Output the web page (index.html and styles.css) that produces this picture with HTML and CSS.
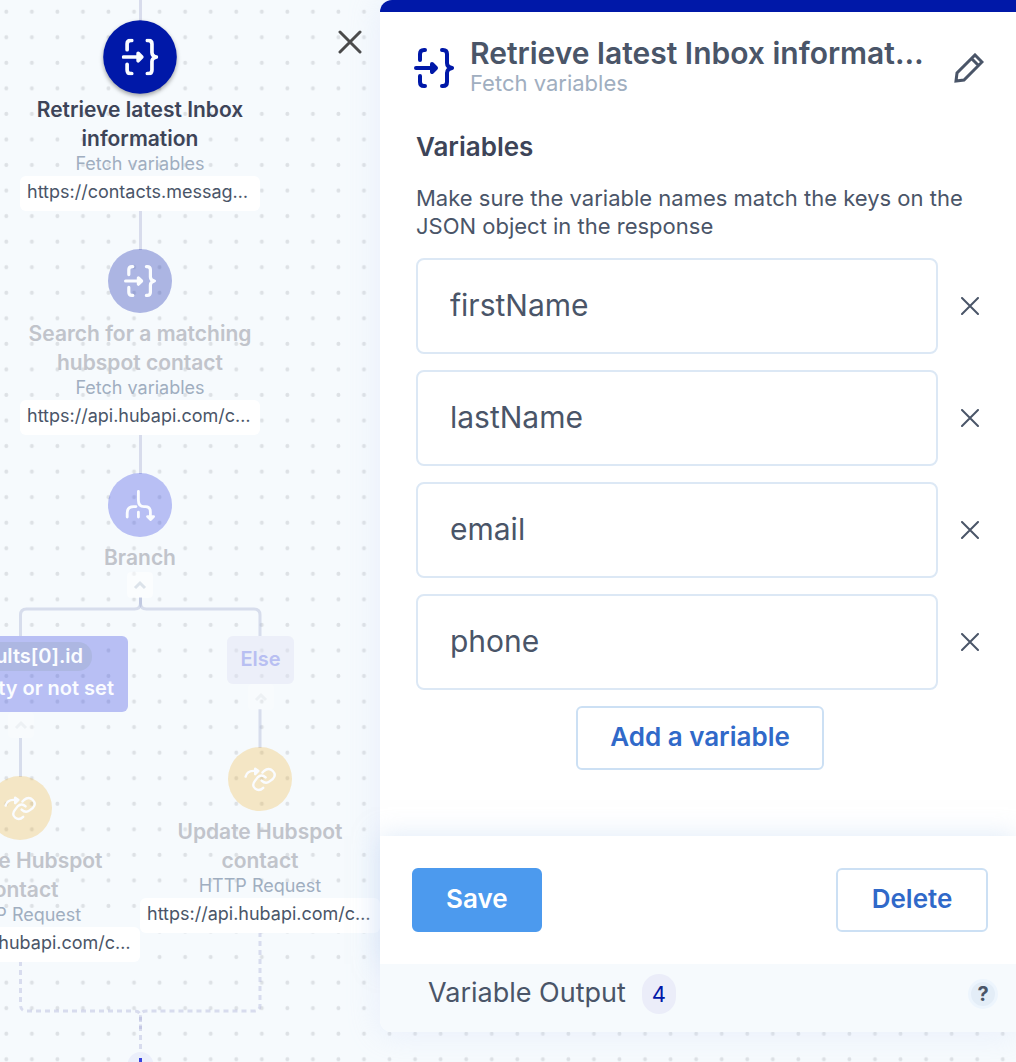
FILE: index.html
```html
<!DOCTYPE html>
<html lang="en">
<head>
<meta charset="utf-8">
<title>Workflow editor</title>
<link rel="stylesheet" href="styles.css">
</head>
<body>
<!-- icons shared by the canvas and the panel -->
<svg class="defs" aria-hidden="true">
  <symbol id="fetch" viewBox="0 0 40 40">
    <g fill="none" stroke="currentColor" stroke-width="4" stroke-linecap="round" stroke-linejoin="round">
      <path d="M11 2h-1q-4 0-4 4v6M6 28v6q0 4 4 4h1"/>
      <path d="M28 2h1q4 0 4 4v9q0 4 5 5q-5 1-5 5v9q0 4-4 4h-1"/>
      <path d="M2 20h18"/>
      <path d="M18 16l4 4l-4 4z" fill="currentColor"/>
    </g>
  </symbol>
  <symbol id="branch" viewBox="0 0 40 40">
    <g fill="none" stroke="currentColor" stroke-width="3.5" stroke-linecap="round" stroke-linejoin="round">
      <path d="M18 3v11q0 8 7 8h2q6 0 6 7v6"/>
      <path d="M15 22h-3q-8 0-8 8v5M18 29v6"/>
      <path d="M29.500 34.500h7.500l-3.750 3.750z" fill="currentColor"/>
    </g>
  </symbol>
  <symbol id="link" viewBox="0 0 40 40">
    <g fill="none" stroke="currentColor" stroke-width="3" stroke-linecap="round" stroke-linejoin="round">
      <path d="M2 17q2-8 12-7"/>
      <path d="M14 7l4 3l-4 4z" fill="currentColor"/>
      <path d="M23 12l2-2q6-5 11 0t0 10l-4 3q-5 4-10-1"/>
      <path d="M27 18q-5-5-10 0l-3 4q-5 6 0 10t10-1"/>
    </g>
  </symbol>
</svg>

<main class="canvas">
  <svg class="wires" aria-hidden="true">
    <defs>
      <pattern id="dots" width="25.55" height="25.55" patternUnits="userSpaceOnUse">
        <circle cx="6.3" cy="11.7" r="2"/>
      </pattern>
    </defs>
    <rect width="100%" height="100%" fill="url(#dots)"/>
    <path class="wire" d="M140.5 0V25M140.5 211V250M140.5 435V474"/>
    <path class="wire dim" d="M140.5 597v6q0 6-6 6H26.5q-6 0-6 6v21M20.5 738v39"/>
    <path class="wire dim" d="M140.5 597v6q0 6 6 6H254q6 0 6 6v21M260 709v39"/>
    <path class="wire dash" d="M20.5 961v44q0 6 6 6h108q6 0 6 6v44"/>
    <path class="wire dash" d="M260 932v73q0 6-6 6H146.5q-6 0-6 6v12"/>
    <circle class="plus" cx="140.5" cy="1065" r="13"/>
    <path class="plus-mark" d="M140.5 1058v14M133.5 1065h14"/>
  </svg>

  <div class="node current fetch-latest">
    <span class="disc"><svg><use href="#fetch"/></svg></span>
    <h3>Retrieve latest Inbox<br>information</h3>
    <small>Fetch variables</small>
    <span class="url">https://contacts.messag…</span>
  </div>

  <div class="node search">
    <span class="disc"><svg><use href="#fetch"/></svg></span>
    <h3>Search for a matching<br>hubspot contact</h3>
    <small>Fetch variables</small>
    <span class="url">https://api.hubapi.com/c…</span>
  </div>

  <div class="node split">
    <span class="disc"><svg><use href="#branch"/></svg></span>
    <h3>Branch</h3>
    <button class="fold" aria-label="Collapse branch"><svg viewBox="0 0 26 26"><path d="M8 16l5-5l5 5"/></svg></button>
  </div>

  <div class="branch if">
    <div class="condition"><span class="var">results[0].id</span>is empty or not set</div>
    <button class="fold" aria-label="Collapse"><svg viewBox="0 0 26 26"><path d="M8 16l5-5l5 5"/></svg></button>
  </div>
  <div class="branch otherwise">
    <div class="condition else">Else</div>
    <button class="fold" aria-label="Collapse"><svg viewBox="0 0 26 26"><path d="M8 16l5-5l5 5"/></svg></button>
  </div>

  <div class="node request update-left">
    <span class="disc"><svg><use href="#link"/></svg></span>
    <h3>Update Hubspot<br>contact</h3>
    <small>HTTP Request</small>
    <span class="url">https://api.hubapi.com/c…</span>
  </div>
  <div class="node request update-right">
    <span class="disc"><svg><use href="#link"/></svg></span>
    <h3>Update Hubspot<br>contact</h3>
    <small>HTTP Request</small>
    <span class="url">https://api.hubapi.com/c…</span>
  </div>

  <button class="close" aria-label="Close panel"><svg viewBox="0 0 24 24"><path d="M2 2L22 22M22 2L2 22"/></svg></button>
</main>

<aside class="panel">
  <header class="head">
    <svg class="head-icon"><use href="#fetch"/></svg>
    <div class="head-text">
      <h1>Retrieve latest Inbox informat…</h1>
      <p>Fetch variables</p>
    </div>
    <button class="edit" aria-label="Rename">
      <svg viewBox="0 0 30 30"><path d="M2 28l1-8L21 2l7 7L10 27zM18 6l6 6"/></svg>
    </button>
  </header>

  <form class="vars">
    <h2>Variables</h2>
    <p>Make sure the variable names match the keys on the JSON object in the response</p>
    <div class="row">
      <input type="text" value="firstName" aria-label="Variable 1">
      <button type="button" class="remove" aria-label="Remove firstName"><svg viewBox="0 0 18 18"><path d="M1 1L17 17M17 1L1 17"/></svg></button>
    </div>
    <div class="row">
      <input type="text" value="lastName" aria-label="Variable 2">
      <button type="button" class="remove" aria-label="Remove lastName"><svg viewBox="0 0 18 18"><path d="M1 1L17 17M17 1L1 17"/></svg></button>
    </div>
    <div class="row">
      <input type="text" value="email" aria-label="Variable 3">
      <button type="button" class="remove" aria-label="Remove email"><svg viewBox="0 0 18 18"><path d="M1 1L17 17M17 1L1 17"/></svg></button>
    </div>
    <div class="row">
      <input type="text" value="phone" aria-label="Variable 4">
      <button type="button" class="remove" aria-label="Remove phone"><svg viewBox="0 0 18 18"><path d="M1 1L17 17M17 1L1 17"/></svg></button>
    </div>
    <button type="button" class="btn add">Add a variable</button>
  </form>

  <div class="actions">
    <button class="btn save">Save</button>
    <button class="btn delete">Delete</button>
  </div>

  <footer class="output">
    <span>Variable Output</span>
    <span class="count">4</span>
    <button class="help" aria-label="Help">?</button>
  </footer>
</aside>
</body>
</html>
```
FILE: styles.css
```css
* {box-sizing: border-box;}
body {margin: 0;min-height: 100vh;position: relative;overflow: hidden;font-family: Inter, "Open Sans", sans-serif;color: #4a5568;background: #f6fafd;}
h1, h2, h3, p {margin: 0;font-weight: 600;}
p {font-weight: 400;}
button {font: inherit;color: inherit;padding: 0;border: 0;background: none;cursor: pointer;}
svg {display: block;fill: none;}
.defs {position: absolute;width: 0;height: 0;}

/* flow canvas */
.canvas {position: absolute;inset: 0;overflow: hidden;}
.wires {width: 100%;height: 100%;}
pattern circle {fill: #dde1e5;}
.wire {stroke: #d8dcec;stroke-width: 3;}
.dim {stroke: #8e9cc8;stroke-opacity: .3;}
.dash {stroke: #a3a6d4;stroke-opacity: .36;stroke-dasharray: 5 4;}
.plus {fill: #ebeffb;}
.plus-mark {stroke: #3a45dc;stroke-width: 3;}

.node {position: absolute;width: 240px;display: flex;flex-direction: column;align-items: center;text-align: center;}
.disc {display: flex;align-items: center;justify-content: center;width: 64px;height: 64px;margin-bottom: 6px;border-radius: 50%;background: rgba(0,24,168,.3);color: #fafcff;}
.disc svg {width: 32px;height: 32px;}
.node h3 {font-size: 21px;line-height: 29px;color: #c1c4cb;}
.node small {font-size: 18px;line-height: 21px;color: #a0aec0;}
.url {align-self: stretch;height: 35px;margin-top: 2px;padding: 0 7px;border-radius: 6px;background: #fff;font-size: 18px;line-height: 32px;text-align: left;white-space: nowrap;}
.current .disc {background: #0018a8;transform: scale(1.15);box-shadow: 0 2px 4px rgba(0,0,0,.35);}
.current h3 {color: #3d4458;}
.split .disc {background: rgba(40,56,226,.3);}
.request .disc {background: rgba(236,166,12,.23);}
.fetch-latest {left: 20px;top: 25px;}
.search {left: 20px;top: 249px;}
.split {left: 20px;top: 473px;}
.update-left {left: -100px;top: 776px;}
.update-right {left: 140px;top: 747px;}

.branch {position: absolute;top: 636px;display: flex;flex-direction: column;align-items: center;}
.if {left: -87px;}
.otherwise {left: 227px;}
.condition {display: flex;flex-direction: column;align-items: flex-end;width: 215px;padding: 6px 14px 7px;border-radius: 6px;background: rgba(40,56,226,.3);color: #fafcff;font-size: 20px;font-weight: 600;line-height: 34px;}
.var {margin-right: 22px;padding: 0 9px;border-radius: 14px;background: #adb7e2;line-height: 29px;}
.else {width: 67px;height: 48px;padding: 6px 0;align-items: center;background: rgba(224,226,244,.45);color: #b8bff2;}
.fold {width: 26px;height: 26px;border-radius: 4px;background: rgba(255,255,255,.5);}
.fold path {stroke: #dce3ea;stroke-width: 3;}
.branch .fold {background: rgba(255,255,255,.25);}
.branch .fold path {stroke: #edf1f4;}

.close {position: absolute;left: 338px;top: 30px;}
.close svg {width: 24px;height: 24px;stroke: #4a4a4a;stroke-width: 3;stroke-linecap: round;}

/* side panel */
.panel {position: relative;margin-left: 380px;border-radius: 12px 0 0 12px;background: #fff;box-shadow: 0 0 32px rgba(200,212,250,.3);}
.head {display: flex;align-items: center;gap: 16px;height: 112px;padding: 0 32px 0 34px;border-top: 12px solid #0018a8;border-radius: 12px 0 0 0;}
.head-icon {flex: none;width: 40px;height: 40px;margin-top: 12px;color: #0018a8;}
.head-text {flex: 1;min-width: 0;margin-top: 8px;}
.head h1 {font-size: 30px;line-height: 34px;white-space: nowrap;}
.head p {font-size: 22px;line-height: 26px;color: #a0aec0;}
.edit {flex: none;margin-top: 12px;}
.edit svg {width: 30px;height: 30px;stroke: #4a5568;stroke-width: 3;}

.vars {display: flex;flex-direction: column;gap: 16px;padding: 18px 32px 66px 36px;}
.vars h2 {font-size: 26px;line-height: 34px;color: #3d4458;}
.vars p {font-size: 22px;line-height: 28px;margin: 4px 0 2px;}
.row {display: flex;align-items: center;gap: 18px;}
.row input {flex: 1;min-width: 0;height: 96px;padding: 0 32px 2px;border: 2px solid #dce8f5;border-radius: 8px;background: #fff;color: inherit;font: 30px Inter, "Open Sans", sans-serif;}
.remove {display: flex;justify-content: center;width: 28px;}
.remove svg {width: 18px;height: 18px;stroke: #4a5568;stroke-width: 2;stroke-linecap: round;}
.btn {height: 64px;padding: 0 32px 4px;border: 2px solid #cce0f4;border-radius: 6px;background: #fff;color: #3069c9;font-size: 26px;font-weight: 600;}
.add {align-self: center;}
.save {border-color: #4c9aee;background: #4c9aee;color: #fff;}
.delete {min-width: 152px;}
.actions {display: flex;justify-content: space-between;padding: 32px 28px 32px 32px;box-shadow: 0 0 24px rgba(190,214,242,.5);}
.output {position: relative;display: flex;align-items: center;gap: 16px;height: 68px;padding: 0 18px 8px 48px;border-radius: 0 0 0 12px;background: #f6fafd;font-size: 27px;line-height: 32px;}
.output span:first-child {padding-bottom: 2px;}
.count {width: 34px;height: 40px;border-radius: 17px;background: #ebedf9;color: #0018a8;font-size: 22px;line-height: 40px;text-align: center;}
.help {width: 30px;height: 30px;margin-left: auto;border: 3px solid #edf5fd;border-radius: 50%;background: #e3edf7;font-size: 20px;font-weight: 700;line-height: 24px;}
```
